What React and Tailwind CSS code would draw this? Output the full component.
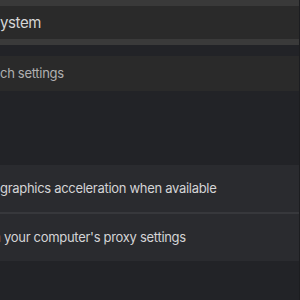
import React from 'react';

const Cut = ({ hidden, shown }) => (
    <span className="flex whitespace-pre">
        <span className="flex w-0 justify-end">{hidden}</span>
        <span>{shown}</span>
    </span>
);

const App = () => {
    return (
        <div className="w-[300px] h-[300px] overflow-hidden bg-[#222327] font-['Inter','Liberation_Sans',sans-serif] border-r border-[#1c1d20]">
            <div className="h-[6px] bg-[#393939]" />
            <div className="h-[33px] pt-[2px] bg-[#2a2a2a] flex items-center text-[15px] tracking-[-0.4px] text-[#d6d6d6]">
                <Cut hidden="S" shown="ystem" />
            </div>
            <div className="h-[6px] bg-[#3a3a3a]" />
            <div className="h-[11px]" />
            <div className="h-[35px] pt-[1px] bg-[#2a2a2a] flex items-center text-[13px] tracking-[-0.3px] text-[#b0b0b0]">
                <Cut hidden="Laun" shown="ch settings" />
            </div>

            <div className="mt-[74px] bg-[#2a2b2f] text-[13px] tracking-[-0.3px] text-[#d4d4d6]">
                <div className="h-[47px] flex items-center">
                    <Cut hidden="Use hardware " shown="graphics acceleration when available" />
                </div>
                <div className="h-[2px] bg-[#37383c]" />
                <div className="h-[47px] flex items-center pl-[4px]">
                    <Cut hidden="Open " shown="your computer's proxy settings" />
                </div>
            </div>
        </div>
    );
};

export default App;
